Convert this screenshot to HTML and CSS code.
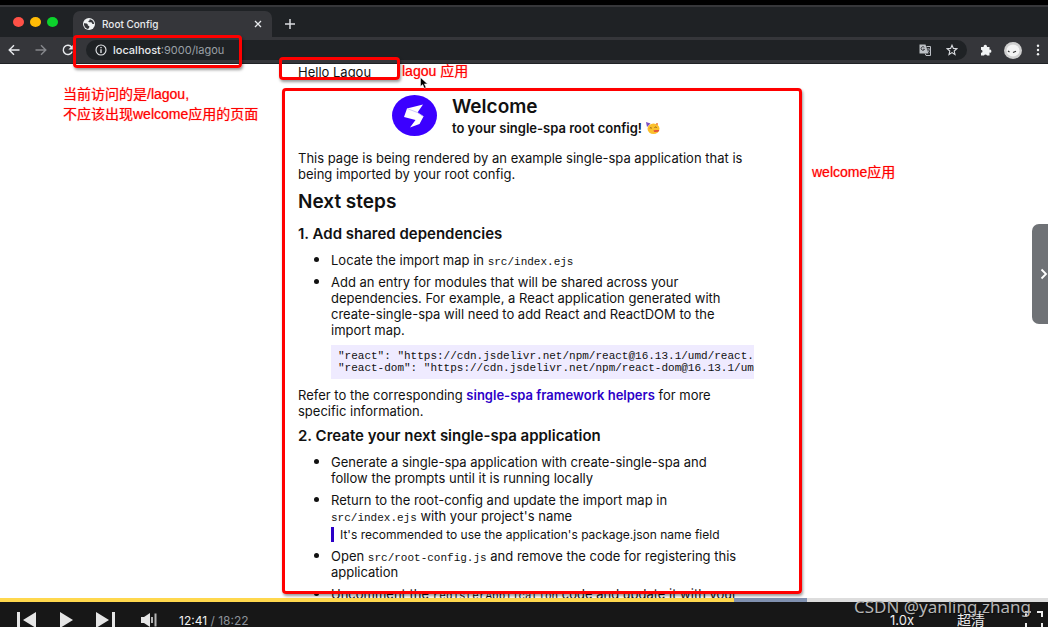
FILE: index.html
```html
<!DOCTYPE html>
<html lang="zh-CN">
<head>
<meta charset="utf-8">
<meta name="viewport" content="width=device-width, initial-scale=1">
<title>Root Config</title>
<link rel="stylesheet" href="styles.css">
</head>
<body>
<div class="player">
  <div class="browser">
    <div class="tabstrip">
      <div class="lights"><i class="light red"></i><i class="light yellow"></i><i class="light green"></i></div>
      <div class="tab">
        <svg width="12" height="12" viewBox="0 0 12 12"><circle cx="6" cy="6" r="6" fill="#f1f3f4"/><path d="M1 5.200c1.500.2 2.600 0 3.400.8.600.6.100 1.400 1 1.700.9.300 1.200.6.900 1.600-.2.700-.8 1.100-1.300 1.600C2.500 10.600.8 8.200 1 5.200zM6.600 1.200c.2 1-.3 1.500-1.100 1.800-.5.300.1 1.100.8 1.300.8.200 1.200-.3 1.900 0 .9.300.5 1.400 1.400 1.700l1.500.1C11 3.400 9.300 1.500 6.600 1.200z" fill="#35363a"/></svg>
        <span class="tab-title">Root Config</span>
        <button class="icon-btn" aria-label="Close tab"><svg width="8" height="8" viewBox="0 0 8 8"><path d="M1 1l6 6M7 1L1 7" stroke="#e8eaed" stroke-width="1.300"/></svg></button>
      </div>
      <button class="icon-btn new-tab" aria-label="New tab"><svg width="10" height="10" viewBox="0 0 10 10"><path d="M5 0v10M0 5h10" stroke="#dadce0" stroke-width="1.500"/></svg></button>
    </div>
    <div class="toolbar">
      <div class="nav">
        <button class="icon-btn" aria-label="Back"><svg width="12" height="12" viewBox="0 0 12 12"><path d="M11.500 6H1.500M6 1.200L1.200 6 6 10.800" fill="none" stroke="#e8eaed" stroke-width="1.400"/></svg></button>
        <button class="icon-btn" aria-label="Forward"><svg width="12" height="12" viewBox="0 0 12 12"><path d="M.5 6h10M6 1.200L10.800 6 6 10.800" fill="none" stroke="#85878b" stroke-width="1.400"/></svg></button>
        <button class="icon-btn" aria-label="Reload"><svg width="12" height="12" viewBox="0 0 12 12"><path d="M9.600 3.200A4.600 4.600 0 1 0 10.200 7.500" fill="none" stroke="#e8eaed" stroke-width="1.400"/><path d="M10.800 1v4.400H6.400z" fill="#e8eaed"/></svg></button>
      </div>
      <div class="omnibox">
        <svg width="12" height="12" viewBox="0 0 12 12"><circle cx="6" cy="6" r="5" fill="none" stroke="#e8eaed" stroke-width="1.100"/><path d="M6 5.300V9M6 3v1.300" stroke="#e8eaed" stroke-width="1.300"/></svg>
        <span class="url"><b>localhost</b>:9000/lagou</span>
        <button class="icon-btn" aria-label="Translate"><svg width="12" height="12" viewBox="0 0 12 12"><path d="M.5.500h6l3 9h-9z" fill="#bdc1c6"/><path d="M7.500 2.500h4v9H7l-.8-2" fill="none" stroke="#bdc1c6"/><path d="M5.300 3.300a1.800 1.800 0 1 0 .3 2H4" fill="none" stroke="#202124" stroke-width=".8"/><path d="M7.500 5h3.500M9.300 4v1M10.400 5c-.3 1.500-.8 2.400-1.500 3M8.700 6.200l1.800 2.600" fill="none" stroke="#9aa0a6" stroke-width=".8"/></svg></button>
        <button class="icon-btn" aria-label="Bookmark"><svg width="12" height="12" viewBox="0 0 12 12"><path d="M6 1.200l1.400 3.200 3.500.3-2.700 2.300.8 3.500-3-1.900-3 1.900.8-3.500L1.100 4.700l3.500-.3z" fill="none" stroke="#dadce0" stroke-width="1.100"/></svg></button>
      </div>
      <button class="icon-btn ext" aria-label="Extensions"><svg width="12" height="12" viewBox="0 0 12 12"><path d="M1 3h2.700a1.700 1.700 0 1 1 3.200 0h2.600v2.700a1.500 1.500 0 1 1 0 2.900v2.900H7a1.600 1.600 0 0 0-3 0H1V8.800a1.500 1.500 0 0 0 0-3z" fill="#f1f3f4"/></svg></button>
      <button class="icon-btn" aria-label="Profile"><svg width="18" height="17" viewBox="0 0 18 17"><ellipse cx="9" cy="8.500" rx="9" ry="8.500" fill="#cfcfcf"/><ellipse cx="9" cy="8.500" rx="6.500" ry="6" fill="#f3f3f3"/><path d="M4 9l1.500 1M9 10.500l3-1.300" stroke="#333" stroke-width="1.200"/></svg></button>
      <button class="icon-btn menu" aria-label="Menu"><svg width="4" height="12" viewBox="0 0 4 12"><g fill="#f1f3f4"><circle cx="2" cy="1.700" r="1.200"/><circle cx="2" cy="6" r="1.200"/><circle cx="2" cy="10.300" r="1.200"/></g></svg></button>
    </div>
    <main class="page">
      <div class="content">
        <div class="hello">Hello Lagou</div>
        <header class="welcome">
          <svg width="45" height="41" viewBox="0 0 45 41"><ellipse cx="22.500" cy="20.500" rx="22.500" ry="20.500" fill="#3b00ff"/><path d="M31 9.500L15 13.500l-3 8.500L23.500 25l-5.500 7.500 9.500-3.500 4-7.500-6-4z" fill="#fff"/><path d="M15 13.500l10.500 4 6 4" fill="none" stroke="#c0b6f5" stroke-width=".8"/></svg>
          <div>
            <h1>Welcome</h1>
            <p class="tagline">to your single-spa root config! <svg width="14" height="12" viewBox="0 0 14 12" role="img" aria-label="party"><ellipse cx="7.500" cy="6.800" rx="6" ry="5.200" fill="#fbc02d"/><path d="M0 0l4.500 1.500L1 5z" fill="#7b4fc0"/><path d="M3.800 6.200q1-1 2 0M8.500 5.500q1.200-1 2.200 0" fill="none" stroke="#704010" stroke-width=".8"/><path d="M7.500 8.300l5.800-.3-1 1.800-4 .3z" fill="#e0483c"/><circle cx="11" cy="2" r="1" fill="#ef7d35"/></svg></p>
          </div>
        </header>
        <p class="intro">This page is being rendered by an example single-spa application that is<br>being imported by your root config.</p>
        <h2>Next steps</h2>
        <h3>1. Add shared dependencies</h3>
        <ul>
          <li>Locate the import map in <code>src/index.ejs</code></li>
          <li>Add an entry for modules that will be shared across your<br>dependencies. For example, a React application generated with<br>create-single-spa will need to add React and ReactDOM to the<br>import map.
<pre>"react": "https://cdn.jsdelivr.net/npm/react@16.13.1/umd/react.production.min.js"
"react-dom": "https://cdn.jsdelivr.net/npm/react-dom@16.13.1/umd/react-dom.production.min.js"</pre></li>
        </ul>
        <p>Refer to the corresponding <a href="#helpers">single-spa framework helpers</a> for more<br>specific information.</p>
        <h3>2. Create your next single-spa application</h3>
        <ul>
          <li>Generate a single-spa application with create-single-spa and<br>follow the prompts until it is running locally</li>
          <li>Return to the root-config and update the import map in<br><code>src/index.ejs</code> with your project's name
            <blockquote>It's recommended to use the application's package.json name field</blockquote></li>
          <li>Open <code>src/root-config.js</code> and remove the code for registering this<br>application</li>
          <li>Uncomment the <code>registerApplication</code> code and update it with your</li>
        </ul>
      </div>
    </main>
  </div>
  <div class="progress"><div class="played"></div><div class="buffered"></div></div>
  <div class="controls">
    <button class="icon-btn prev" aria-label="Previous"><svg width="20" height="16" viewBox="0 0 20 16"><path d="M0 0h3v16H0zM19 0v16L6 8z" fill="#e6e6e6"/></svg></button>
    <button class="icon-btn play" aria-label="Play"><svg width="13" height="16" viewBox="0 0 13 16"><path d="M0 0l13 8L0 16z" fill="#e6e6e6"/></svg></button>
    <button class="icon-btn next" aria-label="Next"><svg width="20" height="16" viewBox="0 0 20 16"><path d="M0 0l13 8L0 16zM16 0h3v16h-3z" fill="#e6e6e6"/></svg></button>
    <button class="icon-btn volume" aria-label="Volume"><svg width="16" height="16" viewBox="0 0 16 16"><path d="M0 5h3l6-4v14l-6-4H0z" fill="#e6e6e6"/><path d="M11 5v6M14.500 1.500v13" stroke="#b5b5b5" stroke-width="2"/></svg></button>
    <span class="time">12:41 <span class="total">/ 18:22</span></span>
    <button class="text-btn speed">1.0x</button>
    <button class="text-btn quality">超清</button>
    <button class="icon-btn" aria-label="Fullscreen"><svg width="18" height="18" viewBox="0 0 18 18"><path d="M1 6V1h5M12 1h5v5M17 12v5h-5M6 17H1v-5" fill="none" stroke="#eee" stroke-width="2"/></svg></button>
  </div>

  <div class="mark mark-url"></div>
  <div class="mark mark-hello"></div>
  <div class="mark mark-welcome"></div>
  <div class="note note-url">当前访问的是/lagou,<br>不应该出现welcome应用的页面</div>
  <div class="note note-hello">lagou 应用</div>
  <div class="note note-welcome">welcome应用</div>
  <svg class="cursor" width="9" height="12" viewBox="0 0 9 12"><path d="M.5.500v9l2.200-2 1.600 3.800 1.800-.8-1.700-3.600h3.100z" fill="#000" stroke="#fff" stroke-width=".5"/></svg>
  <button class="drawer" aria-label="Open panel"><svg width="8" height="12" viewBox="0 0 8 12"><path d="M1.500 1.500L6 6l-4.500 4.500" fill="none" stroke="#fff" stroke-width="1.800"/></svg></button>
  <div class="watermark">CSDN @yanling.zhang</div>
</div>
</body>
</html>
```

FILE: styles.css
```css
* { box-sizing: border-box; }
body { margin: 0; background: #171717; font-family: Inter, "Noto Sans CJK SC", sans-serif; }
h1, h2, h3, p, ul, pre, blockquote { margin: 0; }
svg { display: block; flex: none; }

.icon-btn, .text-btn, .drawer { border: 0; padding: 0; background: none; cursor: pointer; flex: none; }

.player { position: relative; display: flex; flex-direction: column; height: 100vh; overflow: hidden; background: #000; padding-top: 5px; }
.browser { flex: 1; min-height: 0; display: flex; flex-direction: column; background: #fff; }

.tabstrip { flex: none; display: flex; align-items: flex-end; height: 32px; padding-left: 13px; background: #1f2225; border-top: 2px solid #36373a; }
.lights { display: flex; gap: 6px; align-self: center; width: 60px; }
.light { width: 11px; height: 10px; border-radius: 50%; }
.red { background: #ff5147; }
.yellow { background: #ffbb06; }
.green { background: #0cd32c; }
.tab { display: flex; align-items: center; gap: 7px; width: 199px; height: 26px; padding: 0 10px; border-radius: 7px 7px 0 0; background: #35363a; }
.tab-title { flex: 1; color: #e8eaed; font-size: 10px; font-weight: 500; }
.new-tab { margin: 0 0 8px 13px; }

.toolbar { flex: none; display: flex; align-items: center; gap: 12px; height: 27px; padding: 0 8px; background: #35363a; border-bottom: 1px solid #1f2225; }
.nav { display: flex; gap: 15px; }
.omnibox { flex: 1; display: flex; align-items: center; gap: 6px; height: 20px; padding: 0 9px; border-radius: 10px; background: #1f2225; }
.url { flex: 1; color: #9aa0a6; font-size: 11px; }
.url b { color: #e8eaed; font-weight: 500; }
.omnibox .icon-btn { margin-left: 9px; }
.menu { margin-left: 2px; }
.ext { margin-left: 1px; }

.page { flex: 1; min-height: 0; overflow: hidden; color: #111; font-size: 13px; line-height: 16px; }
.content { max-width: 460px; margin: 0 auto; padding-left: 4px; }
.hello { font-size: 13px; }
.welcome { display: flex; justify-content: center; gap: 15px; margin: 15px 0 13px; }
h1 { font-size: 19px; line-height: 24px; font-weight: 600; }
.tagline { display: flex; align-items: center; gap: 4px; font-size: 13px; line-height: 18px; font-weight: 600; }
h2 { margin-top: 8px; font-size: 19px; line-height: 24px; font-weight: 600; }
h3 { margin: 10px 0 8px; font-size: 15px; line-height: 20px; font-weight: 600; }
ul { padding-left: 33px; }
li { margin-bottom: 6px; }
li::marker { font-size: 15px; }
code, pre { font-family: "Liberation Mono", monospace; font-size: 11px; }
code { line-height: 12px; }
pre { overflow: hidden; margin: 7px 0 8px; padding: 5px 7px; line-height: 12px; background: #efebff; }
p + h3 { margin: 7px 0 8px; }
a { color: #2c00c8; font-weight: 600; text-decoration: none; }
blockquote { margin-top: 3px; padding-left: 6px; border-left: 3px solid #2c00c8; font-size: 12px; line-height: 15px; }

.progress { flex: none; display: flex; height: 4px; background: #ddd; }
.played { width: 70%; background: #ffd84d; }
.buffered { width: 7%; background: #8091b0; }
.controls { flex: none; display: flex; align-items: center; height: 25px; padding: 11px 5px 0 17px; background: #171717; }
.prev { margin-right: 23px; }
.play { margin-right: 23px; }
.next { margin-right: 25px; }
.volume { margin-right: 22px; }
.time { flex: 1; color: #f2f2f2; font-size: 12px; white-space: nowrap; }
.total { color: #8c929a; }
.text-btn { color: #eee; font-family: Inter, "Noto Sans CJK SC", sans-serif; font-size: 13px; line-height: 16px; }
.speed { margin-right: 43px; }
.quality { margin-right: 40px; font-size: 14px; }

.mark { position: absolute; border: 3px solid #f00; border-radius: 4px; box-shadow: 1px 2px 3px #0006; pointer-events: none; }
.mark-url { left: 73px; top: 35px; width: 169px; height: 33px; }
.mark-hello { left: 279px; top: 57px; width: 121px; height: 23px; }
.mark-welcome { left: 282px; top: 88px; width: 520px; height: 506px; }
.note { position: absolute; color: #f00; font-family: "Liberation Sans", "Noto Sans CJK SC", sans-serif; font-size: 14px; line-height: 20px; text-shadow: 0 0 1px #f008; white-space: nowrap; }
.note-url { left: 63px; top: 84px; }
.note-hello { left: 402px; top: 61px; }
.note-welcome { left: 812px; top: 162px; }
.cursor { position: absolute; left: 420px; top: 77px; }
.drawer { position: absolute; right: 0; top: 224px; display: flex; align-items: center; justify-content: flex-end; width: 16px; height: 100px; border-radius: 7px 0 0 7px; background: #6f7276; }
.watermark { position: absolute; right: 17px; bottom: 10px; color: #b5b5b5; font-family: "Noto Sans", sans-serif; font-size: 17px; line-height: 20px; text-shadow: 1px 1px 1px #0008; white-space: nowrap; }
```
